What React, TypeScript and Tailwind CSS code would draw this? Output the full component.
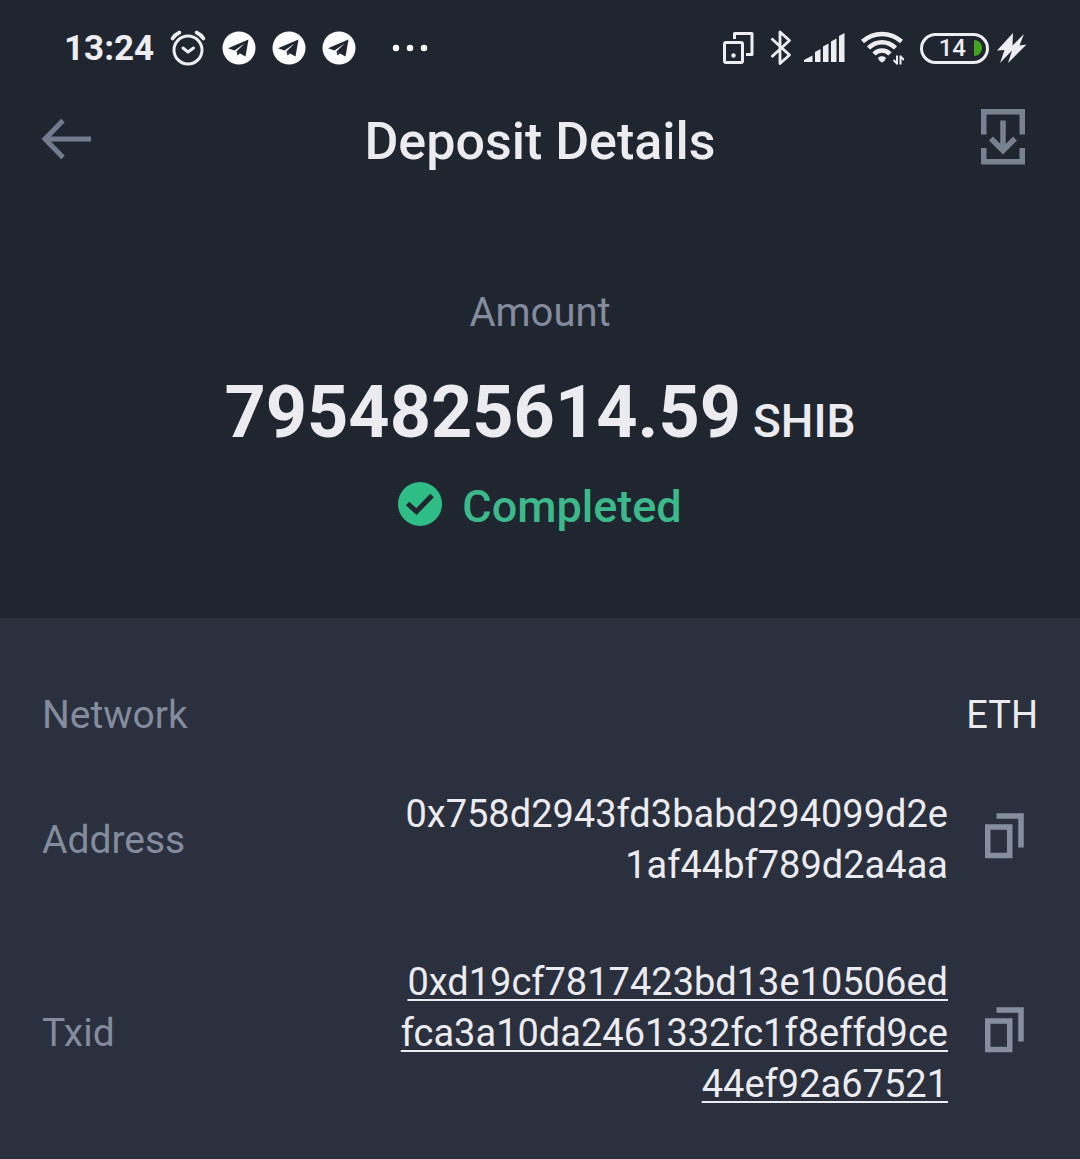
import { useState } from "react";

function AlarmIcon() {
  return (
    <svg width="36" height="36" viewBox="0 0 36 36" fill="none" stroke="#ededf2" strokeLinecap="round" aria-hidden="true">
      <circle cx="18" cy="20" r="14" strokeWidth="3" />
      <path d="M2.500 8.500Q5 4.500 9.500 2.500M33.500 8.500Q31 4.500 26.500 2.500" strokeWidth="3.600" />
      <path d="M13 18L18 22L23.500 18" strokeWidth="3" strokeLinejoin="round" />
    </svg>
  );
}

function TelegramIcon() {
  return (
    <svg width="34" height="34" viewBox="0 0 34 34" aria-hidden="true">
      <circle cx="17" cy="17" r="16.500" fill="#fcfcff" />
      <path d="M26.500 8.500L6 17.200L12.500 19.400L22.500 12.500L14.500 20.500L23.500 25.500Z" fill="#202630" />
      <path d="M14.500 20.500L15.500 24.500L18 22.500Z" fill="#202630" />
    </svg>
  );
}

function DotsIcon() {
  return (
    <svg width="36" height="8" viewBox="0 0 36 8" fill="#fff" aria-hidden="true">
      <circle cx="4" cy="4" r="3.200" />
      <circle cx="18" cy="4" r="3.200" />
      <circle cx="32" cy="4" r="3.200" />
    </svg>
  );
}

function DevicesIcon() {
  return (
    <svg width="31" height="34" viewBox="0 0 31 34" fill="none" stroke="#ededf2" strokeWidth="3" strokeLinejoin="round" aria-hidden="true">
      <rect x="1.500" y="11.500" width="18" height="20" rx="1.500" />
      <path d="M11.500 8V2.500H29V23.500H23" />
      <circle cx="10.500" cy="24.500" r="2.200" fill="#ededf2" stroke="none" />
    </svg>
  );
}

function BluetoothIcon() {
  return (
    <svg width="22" height="36" viewBox="0 0 22 36" fill="none" stroke="#ededf2" strokeWidth="2.800" strokeLinejoin="round" aria-hidden="true">
      <path d="M1.500 8.500L19.500 25L10 33.500V2L19.500 10.500L1.500 27" />
    </svg>
  );
}

function SignalIcon() {
  return (
    <svg width="41" height="30" viewBox="0 0 41 30" fill="#ededf2" aria-hidden="true">
      <path d="M0 29V27L8.500 22.500V29Z" />
      <path d="M11 29V19L16.500 16V29Z" />
      <path d="M19 29V13.500L24.500 10.500V29Z" />
      <path d="M27 29V8.500L32.500 5.500V29Z" />
      <path d="M35 29V3L40.500 0V29Z" />
    </svg>
  );
}

function WifiIcon() {
  return (
    <svg width="43" height="34" viewBox="0 0 43 34" fill="none" stroke="#ededf2" aria-hidden="true">
      <path d="M1.500 10.500C13 0.500 29 0.500 40.500 10.500" strokeWidth="4.500" />
      <path d="M7.500 17C15.500 9.300 26.500 9.300 34.500 17" strokeWidth="4.500" />
      <path d="M13 23C17.500 18.300 24.500 18.300 29 23" strokeWidth="4.500" />
      <path d="M17 27C18.500 24.500 23.500 24.500 25 27Q24 30.500 21 31.500Q18 30.500 17 27Z" fill="#ededf2" stroke="none" />
      <path d="M36 33.500V24.500M32.500 29L36 32.500M39.500 24.500V33.500M39.500 25.500L43 29" strokeWidth="2" />
    </svg>
  );
}

function ChargingIcon() {
  return (
    <svg width="30" height="30" viewBox="0 0 30 30" fill="#ededf2" aria-hidden="true">
      <path d="M16 0L0 17.500L7.500 17L3 30L15 17.500L11 30L29.500 11.500L22.500 12.500L27 1L15.500 12.500Z" />
    </svg>
  );
}

function BackIcon() {
  return (
    <svg width="50" height="42" viewBox="0 0 50 42" fill="none" stroke="#727b8d" strokeWidth="5" aria-hidden="true">
      <path d="M50 21H4M22 2.500L4 21L22 39.500" />
    </svg>
  );
}

function SaveIcon() {
  return (
    <svg width="44" height="56" viewBox="0 0 44 56" fill="none" stroke="#77818f" strokeWidth="5.500" aria-hidden="true">
      <path d="M2.750 25.500V2.750H41.250V25.500M2.750 39V52.750H41.250V39" />
      <path d="M22 11.500V42M10 29.500L22 41.500L34 29.500" />
    </svg>
  );
}

function CopyIcon() {
  return (
    <svg width="39" height="46" viewBox="0 0 39 46" fill="none" stroke="#868d9e" strokeWidth="5.500" aria-hidden="true">
      <rect x="2.750" y="14" width="22" height="28.500" />
      <path d="M11.500 3H36V34.500" />
    </svg>
  );
}

function StatusBar() {
  return (
    <div className="flex h-24 items-center justify-between pr-[53px] pl-16">
      <div className="flex items-center gap-4">
        <time className="pt-0.5 text-[35px] leading-10 font-bold text-[#ededf2]">13:24</time>
        <AlarmIcon />
        <TelegramIcon />
        <TelegramIcon />
        <TelegramIcon />
        <span className="pl-5">
          <DotsIcon />
        </span>
      </div>
      <div className="flex items-center gap-4">
        <DevicesIcon />
        <div className="flex items-center gap-3">
          <BluetoothIcon />
          <SignalIcon />
        </div>
        <WifiIcon />
        <div className="flex items-center gap-2">
          <div className="flex h-[31px] w-[69px] items-center justify-end gap-2 rounded-full border-3 border-[#ededf2] pr-1">
            <span className="text-[24px] leading-6 font-medium text-[#ededf2]">14</span>
            <span className="h-4 w-2 rounded-r-full bg-[#43a422]" />
          </div>
          <ChargingIcon />
        </div>
      </div>
    </div>
  );
}

function CopyButton({ label, value }: { label: string; value: string }) {
  const [copied, setCopied] = useState(false);
  return (
    <button
      type="button"
      aria-label={copied ? label + " copied" : "Copy " + label}
      className="mr-[14px] ml-[37px] shrink-0 cursor-pointer pb-2"
      onClick={() => {
        navigator.clipboard?.writeText(value);
        setCopied(true);
      }}
    >
      <CopyIcon />
    </button>
  );
}

function Lines({ lines }: { lines: string[] }) {
  return (
    <>
      {lines.map((line, i) => (
        <span key={line}>
          {i > 0 && <br />}
          {line}
        </span>
      ))}
    </>
  );
}

const address = ["0x758d2943fd3babd294099d2e", "1af44bf789d2a4aa"];
const txid = ["0xd19cf7817423bd13e10506ed", "fca3a10da2461332fc1f8effd9ce", "44ef92a67521"];

export default function App() {
  return (
    <main className="flex min-h-screen flex-col bg-[#202630] font-[Roboto,sans-serif] text-[#ebebf0]">
      <StatusBar />
      <header className="grid h-[88px] grid-cols-[1fr_auto_1fr] items-center px-[41px]">
        <button type="button" aria-label="Back" className="cursor-pointer justify-self-start pb-0.5">
          <BackIcon />
        </button>
        <h1 className="pt-1 text-[52px] leading-14 font-medium">Deposit Details</h1>
        <button type="button" aria-label="Save" className="mr-[14px] cursor-pointer justify-self-end pb-1.5">
          <SaveIcon />
        </button>
      </header>

      <section className="flex flex-col items-center pt-[105px] pb-[83px]">
        <p className="text-[40px] leading-12 text-[#848b9d]">Amount</p>
        <p className="mt-9 flex items-baseline gap-3 leading-20">
          <span className="text-[72px] font-bold">7954825614.59</span>
          <span className="text-[46px] font-medium">SHIB</span>
        </p>
        <p className="mt-[18px] flex items-center gap-5 text-[45px] leading-14 font-medium text-[#3cb98a]">
          <svg className="mb-1.5" width="44" height="44" viewBox="0 0 44 44" aria-hidden="true">
            <circle cx="22" cy="22" r="22" fill="#2ebd85" />
            <path d="M9.500 21.500L18.500 29.500L34 13.500" fill="none" stroke="#202630" strokeWidth="5" />
          </svg>
          Completed
        </p>
      </section>

      <dl className="flex grow flex-col bg-[#2a303d] px-[42px] pt-18 pb-12 text-[38px] leading-[51px]">
        <div className="flex items-center justify-between">
          <dt className="text-[39px] text-[#848b9d]">Network</dt>
          <dd>ETH</dd>
        </div>
        <div className="mt-12 flex items-center">
          <dt className="grow text-[39px] text-[#848b9d]">Address</dt>
          <dd className="flex items-center text-right">
            <span>
              <Lines lines={address} />
            </span>
            <CopyButton label="Address" value={address.join("")} />
          </dd>
        </div>
        <div className="mt-[66px] flex items-center">
          <dt className="grow text-[39px] text-[#848b9d]">Txid</dt>
          <dd className="flex items-center text-right">
            <a href={"#" + txid.join("")} className="underline decoration-2 underline-offset-4">
              <Lines lines={txid} />
            </a>
            <CopyButton label="Txid" value={txid.join("")} />
          </dd>
        </div>
      </dl>
    </main>
  );
}
